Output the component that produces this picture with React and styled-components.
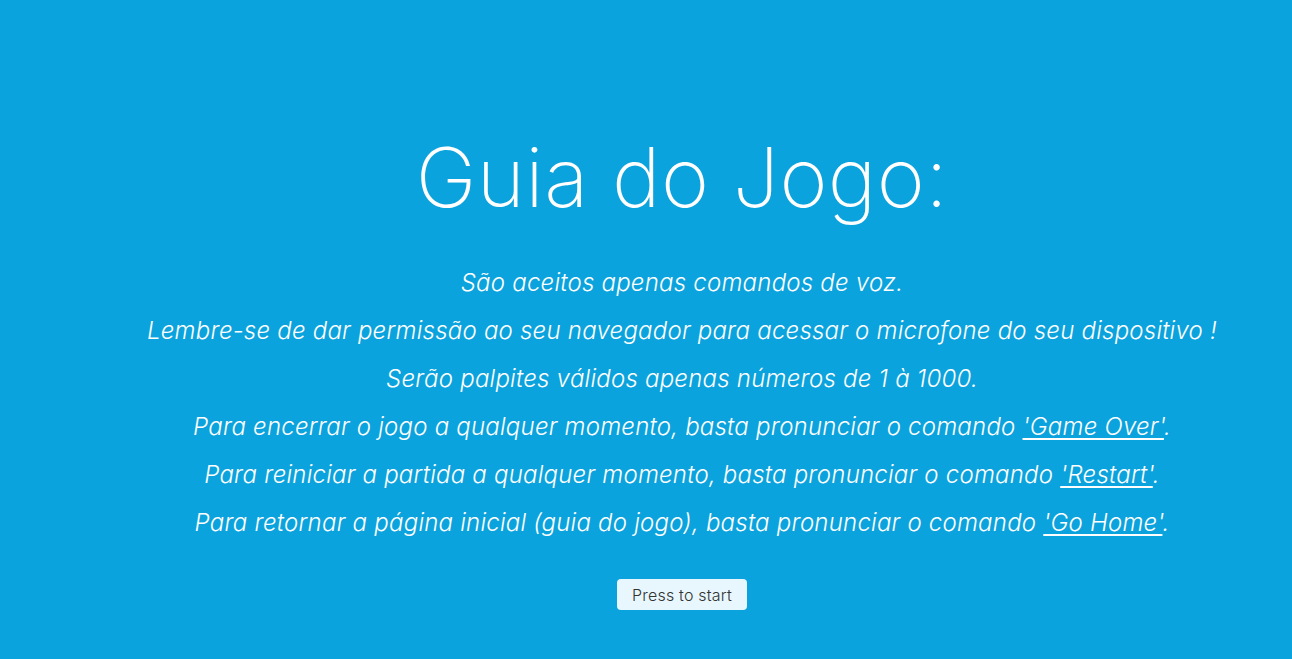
import React from "react";
import styled, { createGlobalStyle } from "styled-components";

const Global = createGlobalStyle`
  html, body { margin: 0; padding: 0; background: #0ba3dd; }
  body { font-family: Inter, "Open Sans", sans-serif; }
`;

const Page = styled.main`
  min-height: 100vh;
  box-sizing: border-box;
  background: #0ba3dd;
  color: #ffffff;
  display: flex;
  flex-direction: column;
  align-items: center;
  padding: 130px 0 0 72px;
`;

const Title = styled.h1`
  margin: 0 0 33px;
  font-family: Inter, sans-serif;
  font-weight: 200;
  font-size: 82px;
  line-height: 96px;
  letter-spacing: 0.4px;
`;

const Rules = styled.div`
  display: flex;
  flex-direction: column;
  align-items: center;
`;

const Rule = styled.p`
  margin: 0;
  font-family: Inter, sans-serif;
  font-style: italic;
  font-weight: 300;
  font-size: 24px;
  line-height: 48px;
  letter-spacing: 0.22px;
  white-space: nowrap;
`;

const Command = styled.span`
  text-decoration: underline;
  text-underline-offset: 3px;
  text-decoration-thickness: 2px;
`;

const StartButton = styled.button`
  margin-top: 32px;
  width: 130px;
  height: 31px;
  border: none;
  border-radius: 4px;
  background: #e8f7fd;
  color: #333333;
  font-family: Inter, sans-serif;
  font-weight: 300;
  font-size: 16px;
  letter-spacing: 0.2px;
  cursor: pointer;
`;

export default function App() {
  return (
    <>
      <Global />
      <Page>
        <Title>Guia do Jogo:</Title>
        <Rules>
          <Rule>São aceitos apenas comandos de voz.</Rule>
          <Rule>Lembre-se de dar permissão ao seu navegador para acessar o microfone do seu dispositivo !</Rule>
          <Rule>Serão palpites válidos apenas números de 1 à 1000.</Rule>
          <Rule>
            Para encerrar o jogo a qualquer momento, basta pronunciar o comando <Command>'Game Over'</Command>.
          </Rule>
          <Rule>
            Para reiniciar a partida a qualquer momento, basta pronunciar o comando <Command>'Restart'</Command>.
          </Rule>
          <Rule>
            Para retornar a página inicial (guia do jogo), basta pronunciar o comando <Command>'Go Home'</Command>.
          </Rule>
        </Rules>
        <StartButton>Press to start</StartButton>
      </Page>
    </>
  );
}
